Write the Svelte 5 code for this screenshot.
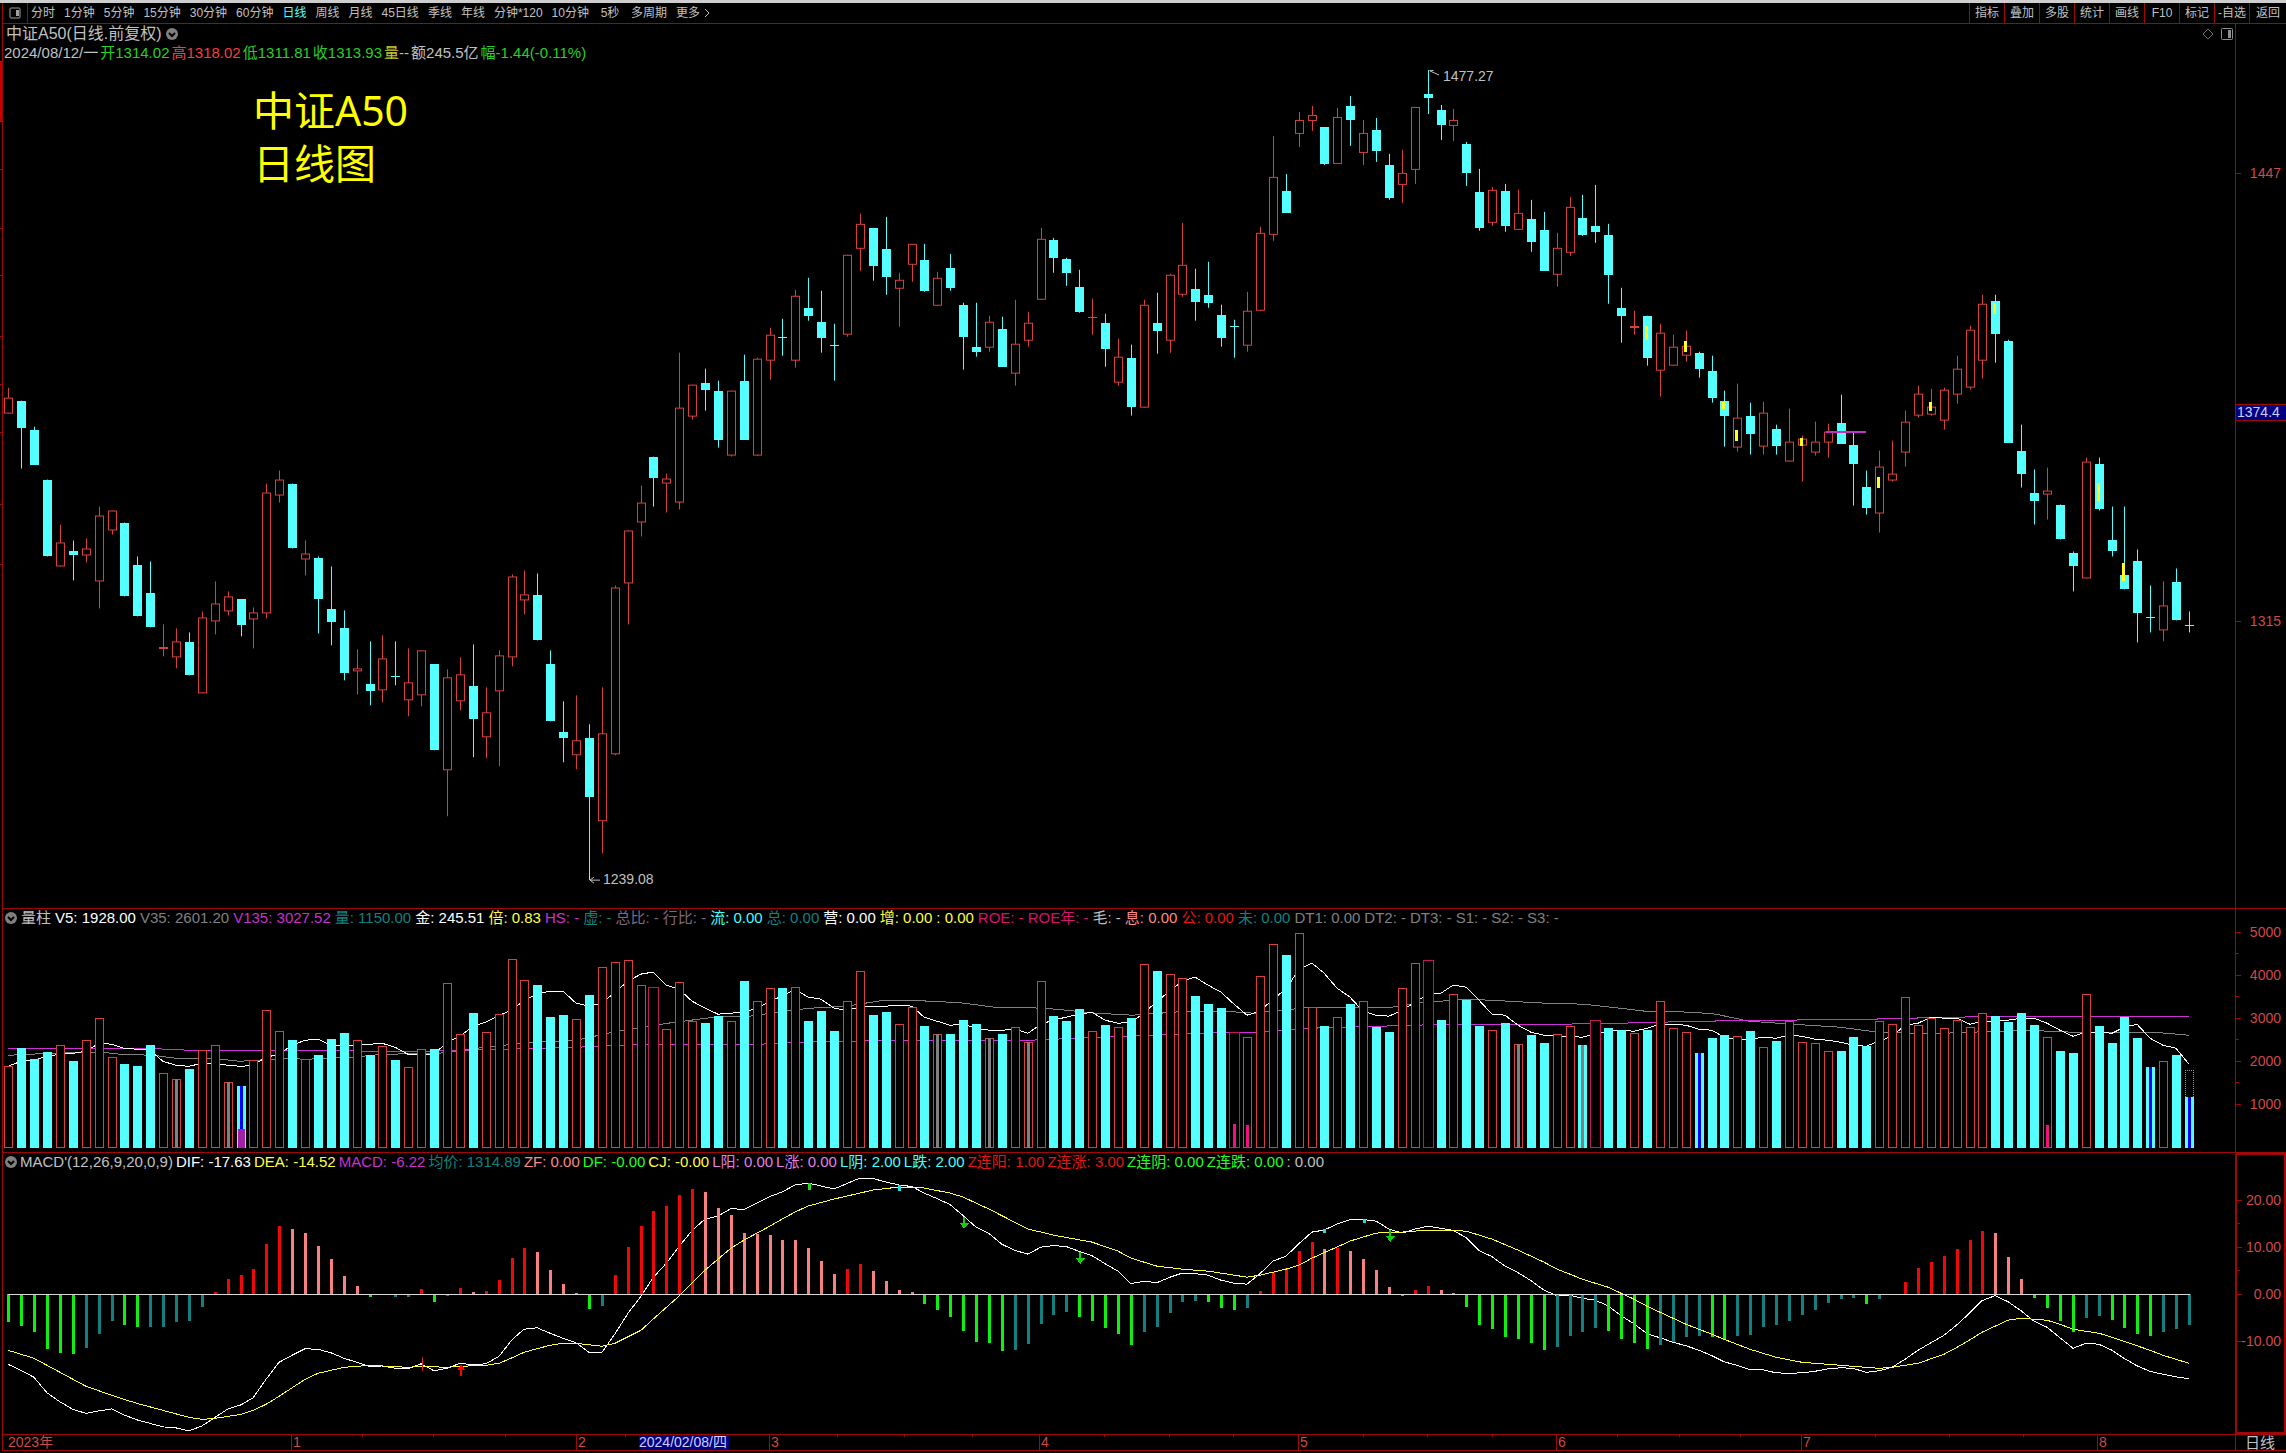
<script>
  const periods = ['分时', '1分钟', '5分钟', '15分钟', '30分钟', '60分钟', '日线', '周线', '月线', '45日线', '季线', '年线', '分钟*120', '10分钟', '5秒', '多周期'];
  const tools = ['指标', '叠加', '多股', '统计', '画线', 'F10', '标记', '-自选', '返回'];

  let period = '日线';

  const quote = [
    ['2024/08/12/一', 'silver'],
    ['开1314.02', 'lime'],
    ['高1318.02', 'red'],
    ['低1311.81', 'lime'],
    ['收1313.93', 'lime'],
    ['量--', 'olive'],
    ['额245.5亿', 'silver'],
    ['幅-1.44(-0.11%)', 'lime']
  ];

  const volumeLegend = [
    ['V5: 1928.00', 'white'], ['V35: 2601.20', 'gray'], ['V135: 3027.52', 'magenta'], ['量: 1150.00', 'teal'],
    ['金: 245.51', 'white'], ['倍: 0.83', 'yellow'], ['HS: -', 'magenta'], ['虚: -', 'teal'], ['总比: -', 'plum'],
    ['行比: -', 'plum'], ['流: 0.00', 'cyan'], ['总: 0.00', 'teal'], ['营: 0.00', 'white'], ['增: 0.00', 'yellow'],
    [': 0.00', 'yellow'], ['ROE: -', 'rose'], ['ROE年: -', 'rose'], ['毛: -', 'silver'], ['息: 0.00', 'salmon'],
    ['公: 0.00', 'crimson'], ['未: 0.00', 'teal'], ['DT1: 0.00', 'gray'], ['DT2: -', 'gray'], ['DT3: -', 'gray'],
    ['S1: -', 'gray'], ['S2: -', 'gray'], ['S3: -', 'gray']
  ];

  const macdLegend = [
    ['DIF: -17.63', 'white'], ['DEA: -14.52', 'yellow'], ['MACD: -6.22', 'magenta'], ['均价: 1314.89', 'teal'],
    ['ZF: 0.00', 'salmon'], ['DF: -0.00', 'green'], ['CJ: -0.00', 'yellow'], ['L阳: 0.00', 'violet'], ['L涨: 0.00', 'violet'],
    ['L阴: 2.00', 'cyan'], ['L跌: 2.00', 'cyan'], ['Z连阳: 1.00', 'crimson'], ['Z连涨: 3.00', 'crimson'],
    ['Z连阴: 0.00', 'green'], ['Z连跌: 0.00', 'green'], [': 0.00', 'silver']
  ];

  // rising (1) or falling (0), high, body top, body bottom, low
  const candles = [
    [1,388,398,414,414],[0,401,401,428,469],[0,427,430,465,465],[0,480,480,557,557],[1,525,543,567,567],
    [0,541,552,556,581],[1,539,549,556,563],[1,507,516,582,609],[1,511,511,531,535],[0,523,523,597,597],
    [0,557,566,617,617],[0,562,594,628,628],[1,625,648,650,657],[1,629,642,658,669],[0,633,643,676,676],
    [1,612,618,694,694],[1,582,604,622,635],[1,592,597,612,616],[0,600,600,626,637],[1,608,613,620,649],
    [1,484,493,614,619],[1,471,480,496,503],[0,484,484,549,549],[1,541,554,560,576],[0,557,559,600,634],
    [0,567,610,623,646],[0,611,629,674,681],[1,650,669,672,695],[0,642,685,692,706],[1,636,659,691,703],
    [0,642,677,678,686],[1,649,683,701,717],[1,651,651,696,707],[0,665,665,751,751],[1,670,678,771,817],
    [1,658,675,702,711],[0,645,687,720,758],[1,688,713,738,759],[1,651,656,692,767],[1,575,577,658,667],
    [1,571,595,601,615],[0,574,596,641,641],[0,651,665,722,722],[0,702,733,739,763],[1,696,741,756,770],
    [0,725,739,798,881],[1,688,734,822,854],[1,586,588,755,756],[1,531,531,584,625],[1,486,503,523,537],
    [0,457,457,478,507],[1,474,479,484,513],[1,353,408,503,510],[1,385,385,417,420],[0,369,383,390,411],
    [0,381,391,440,448],[1,391,391,456,457],[0,355,381,440,440],[1,358,359,456,456],[1,328,335,361,380],
    [0,319,337,338,356],[1,290,296,361,368],[0,278,308,316,321],[0,291,322,338,353],[0,324,345,346,381],
    [1,255,255,335,337],[1,214,224,249,271],[0,228,228,266,281],[0,217,249,277,295],[1,273,280,289,327],
    [1,244,244,265,282],[0,244,260,291,292],[1,272,278,306,306],[0,254,268,288,291],[0,303,305,337,370],
    [0,303,347,352,357],[1,316,322,348,352],[0,317,329,367,367],[1,300,344,374,386],[1,312,323,341,347],
    [1,228,239,300,300],[0,238,240,258,273],[0,258,259,273,286],[0,270,287,312,313],[1,299,317,318,335],
    [0,314,323,349,367],[1,339,357,383,386],[0,345,358,407,416],[1,300,305,408,408],[0,293,323,331,354],
    [1,274,275,341,353],[1,223,265,295,297],[0,269,289,302,321],[0,262,295,303,308],[0,305,315,338,347],
    [0,320,326,327,358],[1,292,311,346,352],[1,227,233,311,311],[1,136,177,235,241],[0,174,191,213,213],
    [1,112,120,134,147],[1,106,115,121,131],[0,127,127,164,165],[1,108,117,164,164],[0,96,106,120,146],
    [1,120,133,153,165],[0,118,130,151,162],[0,154,165,198,200],[1,150,173,185,203],[1,107,107,170,184],
    [0,70,94,98,114],[0,105,110,125,140],[1,109,120,126,141],[0,142,144,173,186],[0,169,192,228,231],
    [1,187,190,223,226],[0,184,191,226,232],[1,190,213,230,230],[0,200,219,242,252],[0,212,230,271,271],
    [1,233,248,275,287],[1,197,207,253,256],[0,195,218,235,236],[0,185,226,232,243],[0,224,235,275,304],
    [0,288,308,316,343],[1,311,326,328,335],[0,316,316,358,366],[1,324,333,371,397],[1,335,347,366,366],
    [1,331,346,356,362],[0,352,353,369,378],[0,356,371,398,403],[0,391,401,416,447],[1,384,418,448,452],
    [0,403,416,434,455],[1,402,413,447,455],[0,425,429,446,455],[1,409,442,462,462],[1,436,439,446,482],
    [1,422,442,453,456],[1,424,432,443,458],[0,395,423,444,444],[0,433,445,464,506],[0,471,487,508,515],
    [1,451,467,514,533],[1,441,474,481,482],[1,411,422,453,467],[1,386,394,416,418],[1,389,407,415,416],
    [1,388,390,421,430],[1,356,369,395,404],[1,326,330,388,390],[1,295,304,361,379],[0,295,301,334,363],
    [0,340,341,443,443],[0,425,451,474,488],[0,470,493,501,525],[1,468,491,495,520],[0,505,505,540,540],
    [0,552,554,567,592],[1,458,462,579,579],[0,458,464,509,511],[0,507,541,552,557],[0,507,576,590,590],
    [0,550,562,614,643],[0,586,618,619,633],[1,582,606,631,642],[0,569,583,621,621],[0,612,626,627,633]
  ];

  // yellow marks: candle, top, bottom
  const marks = [
    [127, 326, 340], [130, 341, 352], [133, 402, 409], [134, 430, 441], [139, 438, 446],
    [145, 477, 488], [149, 402, 411], [154, 303, 314], [162, 483, 501], [164, 564, 582]
  ];

  const volumes = [
    1067,1049,1060,1053,1046,1062,1041,1019,1058,1065,1067,1046,1074,1080,1070,1051,1046,1083,1087,1061,
    1011,1032,1041,1060,1056,1040,1034,1041,1056,1047,1061,1068,1050,1050,984,1035,1014,1033,1015,960,
    981,986,1018,1016,1020,996,968,963,961,986,988,1030,983,1022,1024,1017,1022,982,1002,989,
    989,988,1022,1012,1032,1002,972,1016,1013,1025,1008,1027,1035,1035,1021,1025,1039,1035,1028,1043,
    982,1017,1022,1010,1032,1026,1028,1019,965,972,975,979,997,1005,1009,1033,1038,977,945,956,
    934,1008,1027,1018,1005,1002,1028,1033,989,964,961,1021,995,1001,1027,1031,1024,1045,1036,1044,
    1035,1027,1046,1021,1029,1031,1034,1031,1002,1029,1033,1054,1039,1036,1037,1032,1048,1042,1022,1043,
    1044,1052,1052,1038,1047,1022,1025,998,1026,1019,1029,1021,1028,1014,1017,1023,1014,1026,1038,1052,
    1054,995,1027,1044,1018,1039,1068,1062,1056,1098
  ];
  const solid = new Set([
    1,2,3,5,9,10,11,14,18,22,24,25,26,28,30,33,36,41,42,43,45,54,55,57,60,62,63,64,67,68,71,73,74,75,77,
    81,82,83,85,87,89,92,93,94,99,102,104,106,107,111,113,114,116,118,119,122,124,125,127,131,132,133,135,
    137,142,143,144,154,155,156,157,159,160,162,163,164,165,166,168,169
  ]);
  const wide = new Set([50, 95, 110, 123]);
  const cores = [
    [13, 1080, 'gray'], [17, 1083, 'gray'], [18, 1087, 'blue'], [72, 1035, 'gray'], [76, 1039, 'gray'], [79, 1043, 'gray'],
    [95, 1125, 'pink'], [96, 1126, 'pink'], [117, 1045, 'gray'], [122, 1046, 'gray'], [131, 1054, 'blue'],
    [158, 1126, 'pink'], [166, 1068, 'blue'], [169, 1098, 'blue']
  ];

  const v35 = '8,1056 51,1054 102,1053 120,1055 153,1056 176,1059 212,1059 240,1062 286,1059 306,1060 352,1058 383,1055 439,1054 485,1048 531,1043 577,1041 612,1033 668,1024 714,1018 750,1017 791,1011 811,1009 846,1007 885,1001 933,1002 964,1004 994,1008 1045,1009 1096,1014 1132,1016 1188,1012 1224,1012 1254,1014 1311,1008 1392,1008 1418,1004 1464,1000 1489,1001 1545,1004 1583,1005 1611,1008 1645,1012 1692,1013 1716,1015 1749,1022 1792,1025 1840,1028 1878,1033 1916,1034 1944,1034 2025,1031 2073,1033 2154,1033 2189,1036';
  const v135 = '8,1049 145,1049 190,1051 300,1051 380,1052 430,1052 500,1050 577,1048 640,1045 760,1045 790,1043 850,1042 900,1041 1030,1041 1100,1038 1200,1034 1254,1033 1310,1029 1380,1027 1450,1025 1560,1025 1620,1024 1700,1022 1780,1021 1870,1020 1950,1018 2030,1017 2189,1017';

  // MACD columns: the end of each one, and its colour key
  const zero = 1294;
  const columns = [
    1322,1326,1332,1349,1353,1354,1348,1334,1321,1325,1327,1327,1327,1322,1321,1307,1292,1279,1275,1269,
    1244,1226,1229,1233,1246,1259,1276,1286,1297,1294,1297,1297,1289,1302,1296,1288,1292,1291,1280,1258,
    1248,1252,1270,1284,1293,1309,1306,1275,1247,1226,1211,1206,1195,1189,1192,1208,1215,1233,1234,1235,
    1240,1240,1248,1261,1274,1269,1264,1271,1281,1290,1292,1304,1310,1317,1331,1342,1343,1351,1350,1344,
    1324,1315,1312,1317,1321,1328,1334,1345,1332,1327,1313,1302,1301,1302,1308,1310,1308,1291,1272,1268,
    1251,1242,1249,1248,1251,1259,1270,1287,1296,1290,1286,1290,1293,1307,1325,1329,1337,1339,1343,1350,
    1347,1336,1332,1328,1331,1339,1343,1349,1345,1342,1337,1336,1337,1339,1336,1335,1327,1325,1321,1315,
    1310,1303,1299,1298,1304,1299,1294,1282,1268,1262,1256,1249,1240,1231,1233,1257,1279,1298,1308,1321,
    1332,1318,1316,1320,1328,1334,1336,1332,1329,1325
  ];
  const columnKeys =
    'ggggggtttggtttttrrrr' + 'rrppppppggttrgtrprrr' + 'rppppgtrrrrrrrpppppp' + 'ppppprrppppggggggg' + 'tt' +
    'tttgggggtttttgggtrrr' + 'rrprppppgrrppggggggg' + 'tttt' + 'gggg' + 'tttt' + 'gg' + 'tttttt' +
    'ttttgttrrrrrrrpppggg' + 'gttggggttt';

  const dea = [
    [0,1350],[2,1358],[4,1372],[6,1386],[8,1395],[10,1403],[12,1410],[14,1417],[15,1419],[16,1418],[18,1414],[19,1410],
    [20,1404],[21,1396],[23,1379],[24,1373],[26,1367],[28,1365],[31,1367],[32,1366],[34,1367],[35,1366],[37,1365],[38,1363],
    [40,1352],[42,1345],[43,1343],[44,1343],[46,1346],[47,1343],[49,1330],[50,1319],[52,1296],[54,1270],[56,1248],[57,1240],
    [59,1226],[61,1212],[62,1206],[64,1199],[67,1190],[69,1187],[71,1188],[73,1193],[74,1197],[76,1209],[79,1229],[81,1235],
    [84,1242],[86,1251],[87,1258],[89,1266],[91,1269],[93,1271],[96,1277],[97,1275],[99,1269],[100,1265],[101,1258],
    [103,1247],[104,1241],[106,1233],[108,1232],[110,1230],[113,1231],[115,1239],[117,1250],[119,1262],[120,1269],
    [122,1279],[124,1287],[126,1299],[127,1306],[128,1312],[130,1324],[132,1334],[133,1339],[135,1349],[137,1357],[139,1362],
    [142,1365],[145,1368],[146,1367],[148,1363],[150,1354],[151,1347],[153,1332],[154,1326],[155,1320],[156,1318],[158,1320],
    [159,1324],[160,1329],[162,1333],[164,1341],[166,1350],[167,1355],[169,1363]
  ];

  // arrows in the MACD pane: x, tip, direction
  const arrows = [[964, 1229, -1], [1080, 1264, -1], [1390, 1242, -1], [461, 1364, 1]];

  const months = [[291, '1'], [576, '2'], [769, '3'], [1039, '4'], [1298, '5'], [1556, '6'], [1801, '7'], [2097, '8']];
  const weeks = [362, 433, 505, 625, 837, 904, 972, 1104, 1169, 1233, 1363, 1427, 1492, 1617, 1679, 1740, 1875, 1949, 2023];

  // ticks on the outer left edge
  const edgeTicks = [169, 228, 276, 337, 385, 433, 505, 565];

  // bars stand 13px apart, with one pixel dropped three times in 31
  const barX = (i) => 8 + 13 * i - Math.floor((3 * i) / 31 + 0.21);

  const v5 = volumes.map((v, i) => {
    const y = i < 4 ? [1067, 1062, 1061, 1057][i] : volumes.slice(i - 4, i + 1).reduce((a, b) => a + b) / 5;
    return `${barX(i)},${Math.round(y)}`;
  }).join(' ');

  function deaAt(i) {
    const k = dea.findIndex((p) => p[0] >= i);
    const [i1, y1] = dea[k];
    if (i1 === i) return y1;
    const [i0, y0] = dea[k - 1];
    return y0 + ((y1 - y0) * (i - i0)) / (i1 - i0);
  }

  const deaLine = columns.map((_, i) => `${barX(i)},${deaAt(i)}`).join(' ');
  const difLine = columns.map((y, i) => `${barX(i)},${deaAt(i) + (y - zero) / 2}`).join(' ');

  const pct = (value, start, size) => ((value - start) / size) * 100;
</script>

<div class="terminal">
  <div class="window-edge"></div>

  <header class="toolbar">
    <button class="toolbar__icon" type="button" aria-label="侧栏">
      <svg width="12" height="12" viewBox="0 0 12 12"><rect x="1" y="1" width="10" height="10" rx="1" fill="none" stroke="#a0a0a0" /><path d="M7 3h3v6H7z" fill="#a0a0a0" /></svg>
    </button>
    <nav class="periods">
      {#each periods as name}
        <button type="button" class:active={name === period} on:click={() => (period = name)}>{name}</button>
      {/each}
      <button type="button" class="more">更多<svg width="6" height="10" viewBox="0 0 6 10"><path d="M1 1l4 4-4 4" fill="none" stroke="#c0c0c0" /></svg></button>
    </nav>
    <div class="tools">
      {#each tools as name}
        <button type="button">{name}</button>
      {/each}
    </div>
  </header>

  <main class="panes">
    <i class="edge-mark"></i>

    <section class="pane pane--price">
      {#each edgeTicks as y}<i class="edge-tick" style="top:{pct(y, 24, 886)}%"></i>{/each}
      <div class="plot">
        <div class="heading">
          <h1>中证A50(日线.前复权)</h1>
          <button class="fold" type="button" aria-label="展开"><svg width="12" height="12" viewBox="0 0 12 12"><circle cx="6" cy="6" r="6" fill="#808080" /><path d="M3 5l3 3 3-3" fill="none" stroke="#000" stroke-width="2" /></svg></button>
          <span class="heading__icons">
            <svg width="12" height="12" viewBox="0 0 12 12"><path d="M6 1l5 5-5 5-5-5z" fill="none" stroke="#707070" /></svg>
            <svg width="12" height="12" viewBox="0 0 12 12"><rect x="0.5" y="0.5" width="11" height="11" rx="1" fill="none" stroke="#909090" /><path d="M7 2h3v8H7z" fill="#909090" /></svg>
          </span>
        </div>
        <p class="quote">
          {#each quote as [text, tone]}<span class={tone}>{text}</span>{/each}
        </p>
        <div class="canvas">
          <svg viewBox="3 64 2232 845" preserveAspectRatio="none" shape-rendering="crispEdges">
            {#each candles as [up, high, top, bottom, low], i}
              <path d="M{barX(i) + 0.5} {high}V{low}" class={up ? 'wick-up' : 'wick-down'} />
              {#if bottom - top < 3}
                <rect x={barX(i) - 4} y={top} width="9" height={bottom - top} class={up ? 'flat-up' : 'down'} />
              {:else if up}
                <rect x={barX(i) - 3.5} y={top + 0.5} width="8" height={bottom - top - 1} class="up" />
              {:else}
                <rect x={barX(i) - 4} y={top} width="9" height={bottom - top} class="down" />
              {/if}
            {/each}
            {#each marks as [i, top, bottom]}
              <rect x={barX(i) - 2} y={top} width="3" height={bottom - top} fill="#ffff20" />
            {/each}
            <rect x="1826" y="431" width="40" height="2" fill="#c030c8" />
            <path d="M1429.5 70.5h4M1430 71l9 4M590 881h10M590 881l4-3M590 881l4 3" fill="none" stroke="#c0c0c0" />
          </svg>
          <span class="peak" style="left:{pct(1443, 3, 2232)}%;top:{pct(76, 64, 845)}%">1477.27</span>
          <span class="peak" style="left:{pct(603, 3, 2232)}%;top:{pct(880, 64, 845)}%">1239.08</span>
          <div class="title">中证A50<br />日线图</div>
        </div>
      </div>
      <div class="axis">
        <span class="tick" style="top:{pct(173, 24, 885)}%">1447</span>
        <span class="cursor" style="top:{pct(412, 24, 885)}%">1374.4</span>
        <span class="tick" style="top:{pct(622, 24, 885)}%">1315</span>
      </div>
    </section>

    <section class="pane pane--volume">
      <div class="plot">
        <p class="legend">
          <button class="fold" type="button" aria-label="展开"><svg width="12" height="12" viewBox="0 0 12 12"><circle cx="6" cy="6" r="6" fill="#808080" /><path d="M3 5l3 3 3-3" fill="none" stroke="#000" stroke-width="2" /></svg></button>
          <span class="silver">量柱</span>
          {#each volumeLegend as [text, tone]}<span class={tone}>{text}</span>{/each}
        </p>
        <div class="canvas">
          <svg viewBox="3 928 2232 224" preserveAspectRatio="none" shape-rendering="crispEdges">
            <polyline points={v35} class="line" stroke="#808080" />
            <polyline points={v135} class="line" stroke="#d030d8" />
            <polyline points={v5} class="line" stroke="#ffffff" />
            {#each volumes as top, i}
              {#if solid.has(i)}
                <rect x={barX(i) - 4} y={top} width="9" height={1149 - top} class="down" />
              {:else if wide.has(i)}
                <rect x={barX(i) - 4.5} y={top + 0.5} width="10" height={1148 - top} class="wide" />
              {:else}
                <rect x={barX(i) - 3.5} y={top + 0.5} width="8" height={1148 - top} class="up" />
              {/if}
            {/each}
            {#each cores as [i, top, tone]}
              <rect x={barX(i) - 1} y={top} width="3" height={1149 - top} class="core-{tone}" />
            {/each}
            <rect x={barX(18) - 3} y="1130" width="7" height="19" fill="#a020a8" />
            <path d="M2185.5 1098V1071.5H2193.5V1098" fill="none" stroke="#a8a820" stroke-dasharray="1 1" />
          </svg>
        </div>
      </div>
      <div class="axis">
        {#each [5000, 4000, 3000, 2000, 1000] as value}
          <span class="tick" style="top:{pct(1148 - value * 0.043, 910, 242)}%">{value}</span>
          {#if value < 5000}<i class="minor" style="top:{pct(1126 - value * 0.043, 910, 242)}%"></i>{/if}
        {/each}
      </div>
    </section>

    <section class="pane pane--macd">
      <div class="plot">
        <p class="legend">
          <button class="fold" type="button" aria-label="展开"><svg width="12" height="12" viewBox="0 0 12 12"><circle cx="6" cy="6" r="6" fill="#808080" /><path d="M3 5l3 3 3-3" fill="none" stroke="#000" stroke-width="2" /></svg></button>
          <span class="silver">MACD'(12,26,9,20,0,9)</span>
          {#each macdLegend as [text, tone]}<span class={tone}>{text}</span>{/each}
        </p>
        <div class="canvas">
          <svg viewBox="3 1171 2232 263" preserveAspectRatio="none" shape-rendering="crispEdges">
            <polyline points={difLine} class="line" stroke="#ffffff" />
            {#each columns as y, i}
              <rect x={barX(i) - 1} y={Math.min(y, zero)} width="3" height={Math.abs(y - zero)} class="col-{columnKeys[i]}" />
            {/each}
            <polyline points={deaLine} class="line" stroke="#ffff40" />
            <path d="M8 1294.5H2190" stroke="#d8d8d8" />
            <path d="M422.5 1357v14" stroke="#e02020" />
            <path d="M809 1183v7" stroke="#20e020" stroke-width="3" />
            <path d="M899 1185v6M1324 1229v4M1364 1219v4" stroke="#20e0e0" stroke-width="3" />
            {#each arrows as [x, tip, dir]}
              <path d="M{x - 4} {tip + 6 * dir}H{x - 1}V{tip + 12 * dir}H{x + 1}V{tip + 6 * dir}H{x + 5}L{x} {tip}z" fill={dir > 0 ? '#ff0000' : '#10d010'} />
            {/each}
          </svg>
        </div>
      </div>
      <div class="axis axis--framed">
        {#each [20, 10, 0, -10] as value}
          <span class="tick" style="top:{pct(1292 - value * 4.7, 1153, 277)}%">{value.toFixed(2)}</span>
        {/each}
        {#each [15, 5] as value}
          <i class="minor" style="top:{pct(1292 - value * 4.7, 1153, 277)}%"></i>
        {/each}
      </div>
    </section>

    <footer class="timeline">
      <div class="timeline__scale">
        <span class="year">2023年</span>
        {#each weeks as x}<i class="week" style="left:{pct(x, 3, 2232)}%"></i>{/each}
        {#each months as [x, name]}<span class="month" style="left:{pct(x, 3, 2232)}%">{name}</span>{/each}
        <span class="day" style="left:{pct(639, 3, 2232)}%">2024/02/08/四</span>
      </div>
      <div class="timeline__period">日线</div>
    </footer>
  </main>
</div>

<style>
  :global(body) {
    margin: 0;
    background: #000;
  }

  .terminal {
    display: flex;
    flex-direction: column;
    height: 100vh;
    overflow: hidden;
    background: #000;
    color: #c0c0c0;
    font-family: 'Liberation Sans', 'Noto Sans CJK SC', sans-serif;
    font-size: 14px;
    --line: #a00808;
  }

  .terminal * { box-sizing: border-box; }

  h1, p { margin: 0; }

  button {
    background: none;
    border: 0;
    color: inherit;
    cursor: pointer;
    font: inherit;
    padding: 0;
    white-space: nowrap;
  }

  svg { display: block; }

  .window-edge {
    background: #cecece;
    flex: none;
    height: 3px;
  }

  .toolbar {
    border-bottom: 1px solid var(--line);
    display: flex;
    flex: none;
    font-size: 12px;
    height: 21px;
    line-height: 20px;
    margin-left: 2px;
  }

  .toolbar__icon {
    align-items: center;
    border-left: 1px solid var(--line);
    border-right: 1px solid var(--line);
    display: flex;
    justify-content: center;
    width: 26px;
  }

  .periods {
    display: flex;
    flex: 1;
    gap: 9px;
    padding-left: 3px;
  }

  .periods button { min-width: 24px; }

  .active { color: #54ffff; }

  .more {
    align-items: center;
    display: flex;
    gap: 4px;
  }

  .tools { display: flex; }

  .tools button {
    border-left: 1px solid var(--line);
    width: 35px;
  }

  .tools button:last-child { width: 37px; }

  .panes {
    display: flex;
    flex: 1;
    flex-direction: column;
    min-height: 0;
    padding: 0 0 2px 2px;
    position: relative;
  }

  .edge-mark {
    background: #c80000;
    height: 61px;
    left: 0;
    position: absolute;
    top: 37px;
    width: 2px;
  }

  .edge-tick {
    background: var(--line);
    height: 1px;
    left: -2px;
    position: absolute;
    width: 2px;
  }

  .pane {
    border-bottom: 1px solid var(--line);
    display: flex;
    min-height: 0;
    position: relative;
  }

  .pane--price { flex: 886 1 0; }
  .pane--volume { flex: 243 1 0; }
  .pane--macd { flex: 282 1 0; }

  .plot {
    border-left: 1px solid var(--line);
    display: flex;
    flex: 1;
    flex-direction: column;
    min-width: 0;
  }

  .canvas {
    flex: 1;
    min-height: 0;
    position: relative;
  }

  .canvas svg {
    height: 100%;
    width: 100%;
  }

  .heading {
    align-items: center;
    display: flex;
    gap: 4px;
    height: 20px;
    padding: 0 2px 0 3px;
  }

  .heading h1 {
    font-size: 16px;
    font-weight: normal;
    line-height: 20px;
  }

  .heading__icons {
    display: flex;
    gap: 7px;
    margin-left: auto;
  }

  .quote {
    display: flex;
    font-size: 15px;
    gap: 2px;
    height: 20px;
    line-height: 18px;
    padding-left: 1px;
    white-space: nowrap;
  }

  .legend {
    align-items: center;
    display: flex;
    font-size: 15px;
    gap: 4px;
    height: 18px;
    line-height: 18px;
    padding-left: 2px;
    white-space: nowrap;
  }

  .pane--macd .legend { gap: 3px; }

  .title {
    color: #ffff00;
    font-family: 'Noto Sans', 'Noto Sans CJK SC', sans-serif;
    font-size: 41px;
    left: 11.2%;
    line-height: 53px;
    position: absolute;
    top: 20px;
  }

  .peak {
    line-height: 16px;
    margin-top: -8px;
    position: absolute;
  }

  .axis {
    border-left: 1px solid var(--line);
    color: #d04848;
    flex: none;
    position: relative;
    width: 51px;
  }

  .axis--framed { border: 2px solid var(--line); }

  .tick {
    height: 16px;
    left: 0;
    line-height: 16px;
    margin-top: -8px;
    position: absolute;
    right: 5px;
    text-align: right;
  }

  .axis--framed .tick { right: 3px; }

  .tick::before,
  .minor {
    background: var(--line);
    content: '';
    height: 1px;
    left: 0;
    position: absolute;
    width: 5px;
  }

  .tick::before { top: 8px; }
  .minor { width: 3px; }

  .cursor {
    background: #000080;
    border: 1px solid var(--line);
    border-width: 1px 0;
    color: #d0d0ff;
    height: 17px;
    left: 0;
    line-height: 15px;
    margin-top: -8px;
    padding-left: 1px;
    position: absolute;
    right: 0;
  }

  .timeline {
    border-bottom: 1px solid var(--line);
    display: flex;
    flex: none;
    height: 16px;
    line-height: 15px;
  }

  .timeline__scale {
    border-left: 1px solid var(--line);
    color: #d04848;
    flex: 1;
    position: relative;
  }

  .timeline__period {
    border-left: 1px solid var(--line);
    font-size: 15px;
    padding-left: 9px;
    width: 51px;
  }

  .year { padding-left: 5px; }

  .month {
    border-left: 1px solid var(--line);
    height: 15px;
    padding-left: 1px;
    position: absolute;
  }

  .week {
    background: var(--line);
    height: 2px;
    position: absolute;
    width: 1px;
  }

  .day {
    background: #000080;
    color: #d0d0ff;
    height: 15px;
    padding-right: 2px;
    position: absolute;
    white-space: nowrap;
  }

  .up { fill: #000; stroke: #d84040; }
  .flat-up { fill: #d84040; }
  .down { fill: #54ffff; }
  .wide { fill: #000; stroke: #c01860; }
  .wick-up { stroke: #d84040; }
  .wick-down { stroke: #54ffff; }
  .line { fill: none; stroke-width: 1; }

  .core-gray { fill: #808080; }
  .core-blue { fill: #0000ff; }
  .core-pink { fill: #f01080; }

  .col-g { fill: #10f010; }
  .col-t { fill: #108080; }
  .col-r { fill: #f00808; }
  .col-p { fill: #f88080; }

  .silver { color: #c0c0c0; }
  .white { color: #fff; }
  .gray { color: #808080; }
  .lime { color: #28d028; }
  .green { color: #20ff20; }
  .red { color: #f04040; }
  .crimson { color: #e01818; }
  .olive { color: #c8c828; }
  .yellow { color: #ffff40; }
  .magenta { color: #c830d0; }
  .teal { color: #108080; }
  .plum { color: #806880; }
  .cyan { color: #40ffff; }
  .rose { color: #d81070; }
  .salmon { color: #ff8888; }
  .violet { color: #e080e8; }
</style>
